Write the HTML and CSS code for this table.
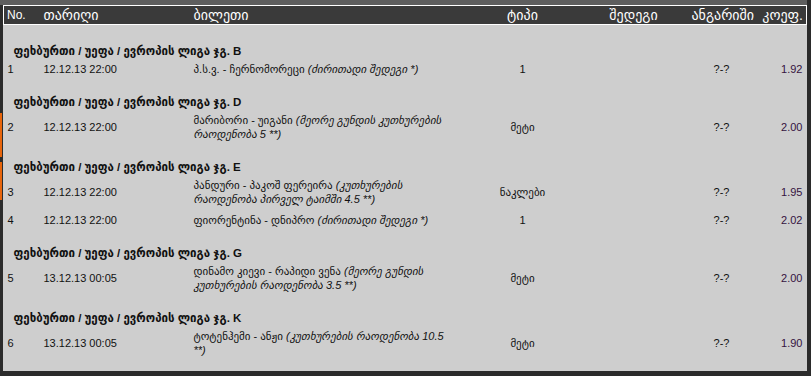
FILE: index.html
```html
<!DOCTYPE html>
<html lang="ka">
<head>
<meta charset="utf-8">
<title>ბილეთები</title>
<link rel="stylesheet" href="styles.css">
</head>
<body>
<div class="topbar"></div>
<div class="page">
  <div class="gutter"><span class="stripe s1"></span><span class="stripe s2"></span></div>
  <table class="bets">
    <colgroup>
      <col class="c-no"><col class="c-date"><col class="c-ticket"><col class="c-type"><col class="c-res"><col class="c-score"><col class="c-coef">
    </colgroup>
    <thead>
      <tr class="head">
        <th class="l latin">No.</th>
        <th class="l">თარიღი</th>
        <th class="l">ბილეთი</th>
        <th class="c">ტიპი</th>
        <th class="c">შედეგი</th>
        <th class="c">ანგარიში</th>
        <th class="r">კოეფ.</th>
      </tr>
    </thead>
    <tbody>
      <tr class="group first"><td colspan="7">ფეხბურთი / უეფა / ევროპის ლიგა ჯგ. B</td></tr>
      <tr class="row">
        <td>1</td><td>12.12.13 22:00</td>
        <td class="ticket">პ.ს.ვ. - ჩერნომორეცი <i>(ძირითადი შედეგი *)</i></td>
        <td class="c">1</td><td class="c"></td><td class="c">?-?</td><td class="r coef">1.92</td>
      </tr>
      <tr class="group"><td colspan="7">ფეხბურთი / უეფა / ევროპის ლიგა ჯგ. D</td></tr>
      <tr class="row">
        <td>2</td><td>12.12.13 22:00</td>
        <td class="ticket">მარიბორი - უიგანი <i>(მეორე გუნდის კუთხურების<br>რაოდენობა 5 **)</i></td>
        <td class="c">მეტი</td><td class="c"></td><td class="c">?-?</td><td class="r coef">2.00</td>
      </tr>
      <tr class="group"><td colspan="7">ფეხბურთი / უეფა / ევროპის ლიგა ჯგ. E</td></tr>
      <tr class="row">
        <td>3</td><td>12.12.13 22:00</td>
        <td class="ticket">პანდური - პაკოშ ფერეირა <i>(კუთხურების<br>რაოდენობა პირველ ტაიმში 4.5 **)</i></td>
        <td class="c">ნაკლები</td><td class="c"></td><td class="c">?-?</td><td class="r coef">1.95</td>
      </tr>
      <tr class="row">
        <td>4</td><td>12.12.13 22:00</td>
        <td class="ticket">ფიორენტინა - დნიპრო <i>(ძირითადი შედეგი *)</i></td>
        <td class="c">1</td><td class="c"></td><td class="c">?-?</td><td class="r coef">2.02</td>
      </tr>
      <tr class="group"><td colspan="7">ფეხბურთი / უეფა / ევროპის ლიგა ჯგ. G</td></tr>
      <tr class="row">
        <td>5</td><td>13.12.13 00:05</td>
        <td class="ticket">დინამო კიევი - რაპიდი ვენა <i>(მეორე გუნდის<br>კუთხურების რაოდენობა 3.5 **)</i></td>
        <td class="c">მეტი</td><td class="c"></td><td class="c">?-?</td><td class="r coef">2.00</td>
      </tr>
      <tr class="group"><td colspan="7">ფეხბურთი / უეფა / ევროპის ლიგა ჯგ. K</td></tr>
      <tr class="row">
        <td>6</td><td>13.12.13 00:05</td>
        <td class="ticket">ტოტენჰემი - ანჟი <i>(კუთხურების რაოდენობა 10.5<br>**)</i></td>
        <td class="c">მეტი</td><td class="c"></td><td class="c">?-?</td><td class="r coef">1.90</td>
      </tr>
      <tr class="tail"><td colspan="7"></td></tr>
    </tbody>
  </table>
</div>
</body>
</html>
```

FILE: styles.css
```css
html, body {
  margin: 0;
  padding: 0;
  background: #2b2b2b;
  font-family: "Liberation Sans", "DejaVu Sans", sans-serif;
  color: #111;
}
.topbar {
  width: 807px;
  height: 5px;
  background: #5e5e5e;
}
.page {
  display: flex;
  width: 807px;
}
.gutter {
  width: 4px;
  display: flex;
  flex-direction: column;
}
.stripe {
  display: block;
  width: 2px;
  background: #e8650c;
}
.s1 { margin-top: 108px; height: 44px; }
.s2 { margin-top: 5px; height: 38px; }
.bets {
  width: 803px;
  border-collapse: collapse;
  table-layout: fixed;
  background: #cecece;
  font-size: 11px;
}
.c-no { width: 36px; }
.c-date { width: 150px; }
.c-ticket { width: 276px; }
.c-type { width: 114px; }
.c-res { width: 108px; }
.c-score { width: 68px; }
.c-coef { width: 51px; }
.head th {
  background: #3a3a3a;
  color: #fff;
  font-weight: normal;
  font-size: 14px;
  height: 18px;
  padding: 0 4px;
  line-height: 18px;
  border-top: 1px solid #fff;
  border-bottom: 1px solid #fff;
  white-space: nowrap;
}
.head th.latin { font-size: 12px; }
.head th:first-child { border-left: 1px solid #fff; padding-left: 3px; }
.head th:last-child { border-right: 1px solid #fff; padding-right: 3px; }
.l { text-align: left; }
.c { text-align: center; }
.r { text-align: right; }
.group td {
  font-weight: bold;
  font-size: 11.5px;
  line-height: 16px;
  padding: 14px 10px 0;
}
.group.first td { padding-top: 18px; }
.row td {
  padding: 3px 4px 4px;
  line-height: 14px;
  vertical-align: middle;
}
.ticket { font-size: 11px; white-space: nowrap; }
.ticket i { font-size: 11px; line-height: 14px; }
.coef { color: #35123f; }
.tail td { height: 10px; padding: 0; }
```
